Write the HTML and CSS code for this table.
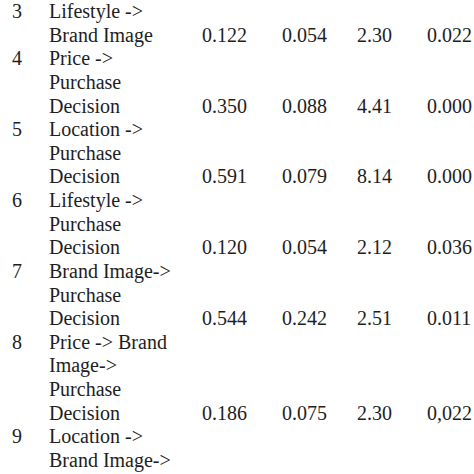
FILE: index.html
```html
<!DOCTYPE html>
<html>
<head>
<meta charset="utf-8">
<link rel="stylesheet" href="styles.css">
</head>
<body>
<table class="results">
  <colgroup>
    <col class="c-no">
    <col class="c-path">
    <col class="c-v1">
    <col class="c-v2">
    <col class="c-v3">
    <col class="c-v4">
  </colgroup>
  <tbody>
    <tr><td class="no">3</td><td class="path"><span class="txt">Lifestyle -&gt; Brand Image</span></td><td>0.122</td><td>0.054</td><td>2.30</td><td>0.022</td></tr>
    <tr><td class="no">4</td><td class="path"><span class="txt">Price -&gt; Purchase Decision</span></td><td>0.350</td><td>0.088</td><td>4.41</td><td>0.000</td></tr>
    <tr><td class="no">5</td><td class="path"><span class="txt">Location -&gt; Purchase Decision</span></td><td>0.591</td><td>0.079</td><td>8.14</td><td>0.000</td></tr>
    <tr><td class="no">6</td><td class="path"><span class="txt">Lifestyle -&gt; Purchase Decision</span></td><td>0.120</td><td>0.054</td><td>2.12</td><td>0.036</td></tr>
    <tr><td class="no">7</td><td class="path"><span class="txt">Brand Image-&gt; Purchase Decision</span></td><td>0.544</td><td>0.242</td><td>2.51</td><td>0.011</td></tr>
    <tr><td class="no">8</td><td class="path"><span class="txt">Price -&gt; Brand Image-&gt; Purchase Decision</span></td><td>0.186</td><td>0.075</td><td>2.30</td><td>0,022</td></tr>
    <tr><td class="no">9</td><td class="path"><span class="txt">Location -&gt; Brand Image-&gt; Purchase Decision</span></td><td></td><td></td><td></td><td></td></tr>
  </tbody>
</table>
</body>
</html>
```
FILE: styles.css
```css
html, body {
  margin: 0;
  padding: 0;
  background: #ffffff;
  overflow: hidden;
}
body {
  width: 474px;
  height: 474px;
  font-family: "Liberation Serif", "Times New Roman", serif;
  font-size: 20px;
  line-height: 23.63px;
  color: #1e1e1e;
}
.results {
  border-collapse: collapse;
  table-layout: fixed;
  width: 500px;
  margin-left: 12px;
}
.results td {
  padding: 0;
  vertical-align: bottom;
  text-align: left;
  white-space: nowrap;
}
.c-no { width: 37px; }
.c-path { width: 153px; }
.c-v1 { width: 80px; }
.c-v2 { width: 75px; }
.c-v3 { width: 70px; }
.c-v4 { width: 85px; }
.results td.no {
  vertical-align: top;
}
.results td.path {
  white-space: normal;
}
.txt {
  display: block;
  width: 135px;
}
```
